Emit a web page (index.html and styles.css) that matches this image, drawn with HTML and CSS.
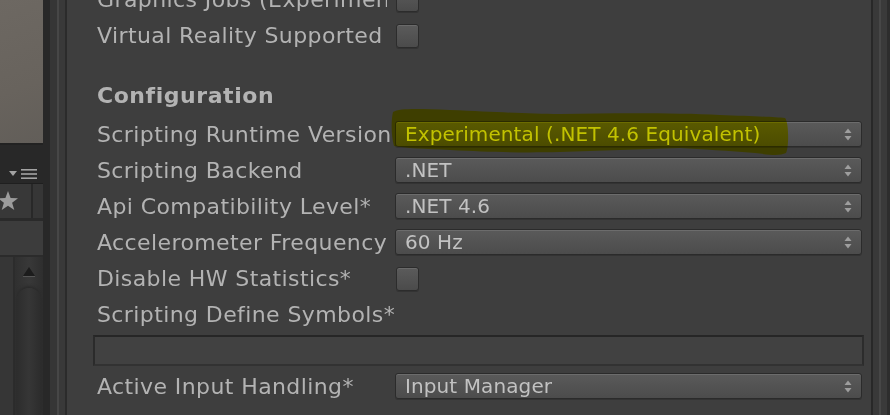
FILE: index.html
```html
<!DOCTYPE html>
<html>
<head>
<meta charset="utf-8">
<link rel="stylesheet" href="styles.css">
</head>
<body>
<div class="app">
  <div class="left">
    <div class="scene"></div>
    <div class="toolbar">
      <svg class="menu-icon" width="28" height="10" viewBox="0 0 28 10">
        <polygon points="0,2 8,2 4,7" fill="#a3a3a3"/>
        <rect x="12" y="0" width="16" height="1.6" fill="#a3a3a3"/>
        <rect x="12" y="4.2" width="16" height="1.6" fill="#a3a3a3"/>
        <rect x="12" y="8.4" width="16" height="1.6" fill="#a3a3a3"/>
      </svg>
    </div>
    <div class="favbar">
      <div class="fav-cell">
        <svg class="star" width="22" height="22" viewBox="0 0 22 22">
          <polygon points="11,1 13.6,8 21,8.2 15.1,12.8 17.3,20 11,15.8 4.7,20 6.9,12.8 1,8.2 8.4,8" fill="#9c9c9c"/>
        </svg>
      </div>
      <div class="fav-rest"></div>
    </div>
    <div class="sep3"></div>
    <div class="search"></div>
    <div class="sep2"></div>
    <div class="list">
      <div class="list-main"></div>
      <div class="list-sep"></div>
      <div class="scroll">
        <svg class="scroll-arrow" width="14" height="12" viewBox="0 0 14 12">
          <polygon points="7,1 13,10 1,10" fill="#1c1c1c"/>
          <rect x="1" y="10" width="12" height="1" fill="#555"/>
        </svg>
        <div class="thumb"></div>
      </div>
    </div>
  </div>
  <div class="strip s1"></div>
  <div class="strip s2"></div>
  <div class="strip s3"></div>
  <div class="strip s4"></div>
  <div class="strip s5"></div>
  <main class="inspector">
    <div class="content">
      <div class="row">
        <div class="label label-clip">Graphics Jobs (Experimental)*</div>
        <div class="checkbox"></div>
      </div>
      <div class="row">
        <div class="label">Virtual Reality Supported</div>
        <div class="checkbox"></div>
      </div>
      <div class="spacer"></div>
      <div class="row header">
        <div class="label">Configuration</div>
      </div>
      <div class="row">
        <div class="label">Scripting Runtime Version</div>
        <div class="popup"><span class="popup-text">Experimental (.NET 4.6 Equivalent)</span><svg class="arrows" width="8" height="15" viewBox="0 0 8 15"><polygon points="0.5,6 4,1.5 7.5,6" fill="#9e9e9e"/><polygon points="0.5,9 4,13.5 7.5,9" fill="#9e9e9e"/></svg></div>
      </div>
      <div class="row">
        <div class="label">Scripting Backend</div>
        <div class="popup"><span class="popup-text">.NET</span><svg class="arrows" width="8" height="15" viewBox="0 0 8 15"><polygon points="0.5,6 4,1.5 7.5,6" fill="#9e9e9e"/><polygon points="0.5,9 4,13.5 7.5,9" fill="#9e9e9e"/></svg></div>
      </div>
      <div class="row">
        <div class="label">Api Compatibility Level*</div>
        <div class="popup"><span class="popup-text">.NET 4.6</span><svg class="arrows" width="8" height="15" viewBox="0 0 8 15"><polygon points="0.5,6 4,1.5 7.5,6" fill="#9e9e9e"/><polygon points="0.5,9 4,13.5 7.5,9" fill="#9e9e9e"/></svg></div>
      </div>
      <div class="row">
        <div class="label">Accelerometer Frequency</div>
        <div class="popup"><span class="popup-text">60 Hz</span><svg class="arrows" width="8" height="15" viewBox="0 0 8 15"><polygon points="0.5,6 4,1.5 7.5,6" fill="#9e9e9e"/><polygon points="0.5,9 4,13.5 7.5,9" fill="#9e9e9e"/></svg></div>
      </div>
      <div class="row">
        <div class="label">Disable HW Statistics*</div>
        <div class="checkbox"></div>
      </div>
      <div class="row">
        <div class="label label-wide">Scripting Define Symbols*</div>
      </div>
      <div class="textfield"></div>
      <div class="row">
        <div class="label">Active Input Handling*</div>
        <div class="popup"><span class="popup-text">Input Manager</span><svg class="arrows" width="8" height="15" viewBox="0 0 8 15"><polygon points="0.5,6 4,1.5 7.5,6" fill="#9e9e9e"/><polygon points="0.5,9 4,13.5 7.5,9" fill="#9e9e9e"/></svg></div>
      </div>
    </div>
  </main>
  <div class="strip s1 r1"></div>
  <div class="strip s4 r2"></div>
  <div class="strip s3"></div>
  <div class="strip s4 r4"></div>
  <div class="strip r5"></div>
  <svg class="highlight" width="890" height="415" viewBox="0 0 890 415">
    <path d="M393,112 C400,108 420,109 450,110 C500,112 530,114 560,114 C620,113 680,113 720,115 C750,116 775,117 785,118 C789,122 789,148 786,153 C780,156 770,155 755,153 C730,151 700,149 680,148 C640,149 600,151 560,152 C520,153 490,152 450,150 C425,149 405,148 394,146 C391,136 391,120 393,112 Z" fill="#ffff00"/>
  </svg>
</div>
</body>
</html>
```

FILE: styles.css
```css
html, body {
  margin: 0;
  padding: 0;
  background: #3e3e3e;
}

body {
  width: 890px;
  height: 415px;
  overflow: hidden;
  font-family: "DejaVu Sans", Verdana, sans-serif;
}

.app {
  position: relative;
  display: flex;
  width: 890px;
  height: 415px;
  overflow: hidden;
}

/* ---------- left panel ---------- */
.left {
  width: 43px;
  flex: none;
  display: flex;
  flex-direction: column;
  background: #2a2a2a;
}

.scene {
  height: 143px;
  flex: none;
  background: linear-gradient(160deg, #6d6862 0%, #68635d 60%, #625e59 100%);
  border-bottom: 2px solid #222;
}

.toolbar {
  height: 38px;
  flex: none;
  background: #282828;
  display: flex;
  align-items: flex-end;
  padding-left: 9px;
  padding-bottom: 4px;
  box-sizing: border-box;
}

.menu-icon {
  display: block;
}

.favbar {
  height: 35px;
  flex: none;
  display: flex;
  border-top: 1px solid #1f1f1f;
  box-sizing: border-box;
  background: #383838;
}

.fav-cell {
  width: 31px;
  flex: none;
  border-right: 2px solid #282828;
  display: flex;
  align-items: center;
  overflow: hidden;
}

.star {
  display: block;
  margin-left: -3px;
}

.fav-rest {
  flex: 1;
  background: #363636;
}

.sep3 {
  height: 3px;
  flex: none;
  background: #2a2a2a;
}

.search {
  height: 34px;
  flex: none;
  background: #3c3c3c;
}

.sep2 {
  height: 2px;
  flex: none;
  background: #2b2b2b;
}

.list {
  flex: 1;
  display: flex;
}

.list-main {
  width: 13px;
  background: #363636;
}

.list-sep {
  width: 2px;
  background: #2c2c2c;
}

.scroll {
  flex: 1;
  background: linear-gradient(90deg, #303030, #383838 50%, #2e2e2e);
  display: flex;
  flex-direction: column;
  align-items: center;
  padding-top: 9px;
}

.scroll-arrow {
  display: block;
}

.thumb {
  margin-top: 10px;
  width: 24px;
  flex: 1;
  border-radius: 12px 12px 0 0;
  background: linear-gradient(90deg, #2d2d2d, #363636 50%, #2c2c2c);
  box-shadow: 0 -2px 3px #2a2a2a;
}

/* ---------- strips ---------- */
.strip {
  flex: none;
  height: 415px;
}

.s1 { width: 7px; background: #282828; }
.s2 { width: 7px; background: #363636; }
.s3 { width: 2px; background: #474747; }
.s4 { width: 6px; background: #393939; }
.s5 { width: 2px; background: #2b2b2b; }
.r1 { width: 2px; }
.r2 { width: 6px; }
.r4 { width: 6px; background: #3a3a3a; }
.r5 { width: 3px; background: #2d2d2d; }

/* ---------- inspector ---------- */
.inspector {
  width: 804px;
  flex: none;
  background: #3e3e3e;
  padding: 0 9px 0 30px;
  box-sizing: border-box;
  overflow: hidden;
  color: #b3b3b3;
}

.content {
  margin-top: -19px;
  display: flex;
  flex-direction: column;
}

.row {
  height: 36px;
  flex: none;
  display: flex;
  align-items: center;
}

.label {
  width: 298px;
  flex: none;
  font-size: 22px;
  letter-spacing: 0.4px;
  white-space: nowrap;
  overflow: hidden;
}

.label-clip {
  width: 290px;
  margin-right: 8px;
}

.label-wide {
  width: auto;
}

.spacer {
  height: 24px;
  flex: none;
}

.header {
  margin-bottom: 3px;
}

.header .label {
  font-weight: bold;
  letter-spacing: 0.55px;
}

.checkbox {
  width: 23px;
  height: 24px;
  margin-left: 1px;
  margin-top: 1px;
  box-sizing: border-box;
  border: 1px solid #2c2c2c;
  border-radius: 3px;
  background: linear-gradient(#5b5b5b, #4b4b4b);
  box-shadow: inset 0 1px 0 #6a6a6a, 0 1px 0 #333;
}

.popup {
  flex: 1;
  height: 26px;
  box-sizing: border-box;
  border: 1px solid #2b2b2b;
  border-radius: 3px;
  background: linear-gradient(#5a5a5a, #4c4c4c);
  box-shadow: inset 0 1px 0 #6c6c6c, 0 1px 0 #333;
  display: flex;
  align-items: center;
  justify-content: space-between;
  padding: 0 9px 0 9px;
}

.popup-text {
  font-size: 20px;
  letter-spacing: 0.1px;
  color: #c2c2c2;
  white-space: nowrap;
  line-height: 24px;
}

.arrows {
  display: block;
  flex: none;
}

.textfield {
  height: 31px;
  flex: none;
  margin: 3px -2px 2px -4px;
  box-sizing: border-box;
  background: #414141;
  border-top: 2px solid #262626;
  border-left: 2px solid #2b2b2b;
  border-right: 2px solid #2c2c2c;
  border-bottom: 2px solid #323232;
}

/* ---------- highlighter overlay ---------- */
.highlight {
  position: absolute;
  left: 0;
  top: 0;
  pointer-events: none;
  mix-blend-mode: multiply;
}
```
